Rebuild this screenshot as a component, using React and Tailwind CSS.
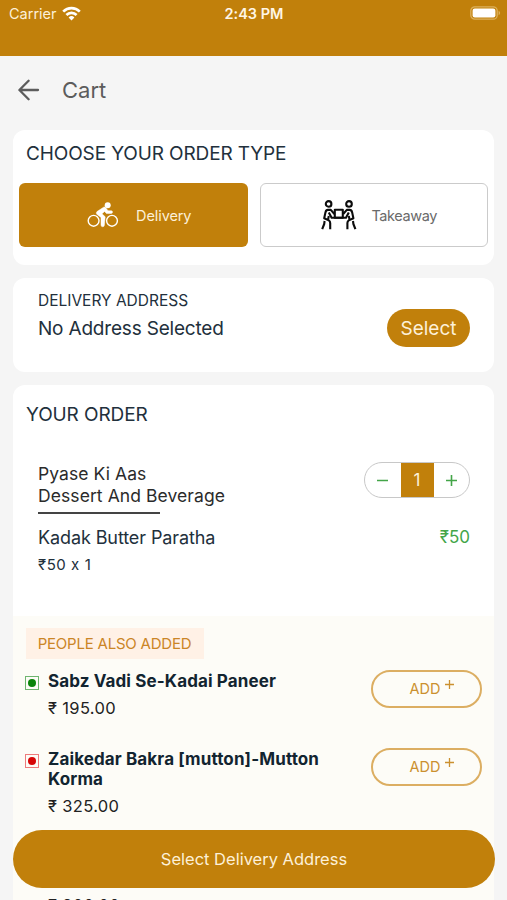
const suggestions = [
  { name: 'Sabz Vadi Se-Kadai Paneer', price: '195.00', veg: true },
  { name: 'Zaikedar Bakra [mutton]-Mutton Korma', price: '325.00', veg: false },
];

function StatusBar() {
  return (
    <div className="h-14 bg-[#c1800b] text-white grid grid-cols-3 items-start pl-[7px] pr-1.5 pt-1">
      <div className="flex items-center gap-[5px] pl-0.5 h-5">
        <span className="text-[14.5px] leading-5 text-[#fdf0d8]">Carrier</span>
        <svg className="w-[19px] h-[15px] mb-0.5" viewBox="0 0 19 15" fill="none" stroke="currentColor" strokeWidth="2.7">
          <path d="M1.2 5.6a11.8 11.8 0 0 1 16.6 0" />
          <path d="M4.4 9a7.2 7.2 0 0 1 10.2 0" />
          <path d="M9.5 14.6 6.6 11.5a4.2 4.2 0 0 1 5.8 0z" fill="currentColor" stroke="none" />
        </svg>
      </div>
      <div className="text-center text-[14.5px] leading-5 font-semibold text-[#fff6e6] whitespace-nowrap">2:43 PM</div>
      <div className="flex justify-end items-center h-[18px]">
        <svg className="w-[31px] h-[14px]" viewBox="0 0 31 14">
          <rect x="0.8" y="0.8" width="26.4" height="12.4" rx="4" fill="none" stroke="#dcb05c" strokeWidth="1.3" />
          <rect x="2.6" y="2.5" width="22.8" height="9" rx="2.2" fill="#fff" />
          <path d="M28.6 4.8c2 .8 2 3.6 0 4.4z" fill="#dcb05c" />
        </svg>
      </div>
    </div>
  );
}

function BikeIcon() {
  return (
    <svg className="w-8 h-[26px]" viewBox="0 0 32 26" fill="none" stroke="#fff">
      <circle cx="6.6" cy="18.8" r="5.4" strokeWidth="1.4" />
      <circle cx="25" cy="18.8" r="5.4" strokeWidth="1.4" />
      <circle cx="20.7" cy="3.2" r="3" fill="#fff" stroke="none" />
      <path d="M16.6 5.2 10 9.6C9 10.6 9.2 12 10.4 12.8L14 15.4V23a1.7 1.7 0 0 0 3.4 0L18.2 14.8 15 11.8 17.6 9.4 19.4 11.4H24.2A1.1 1.1 0 0 0 24.2 8.8H21L18.8 5.8C18.2 5 17.4 4.8 16.6 5.2Z" fill="#fff" strokeWidth="0.5" />
    </svg>
  );
}

function HandoverIcon() {
  return (
    <svg className="w-9 h-8" viewBox="0 0 36 32" fill="none" stroke="#0c0c0c" strokeWidth="2.1" strokeLinejoin="round">
      <circle cx="7.6" cy="4.9" r="2.8" />
      <circle cx="28" cy="4.9" r="2.8" />
      <rect x="13.8" y="10.8" width="8" height="8" />
      <path d="M13.4 15 9.8 10.9H6.8C5 10.9 4.8 12 4.4 13.6L3.2 19.2 7.8 21.4Q9.2 22.2 9.2 24V30.2" />
      <path d="M22.2 15 25.8 10.9H28.8C30.6 10.9 30.8 12 31.2 13.6L32.4 19.2 27.8 21.4Q26.4 22.2 26.4 24V30.2" />
      <path d="M7.8 13.4 10.6 18.8H25L27.8 13.4" />
      <path d="M7.8 17 7 20.8M27.8 17 28.6 20.8" />
      <path d="M3.6 22 3.2 25 1.2 30.2M32 22 32.4 25 34.4 30.2" />
    </svg>
  );
}

function FoodMark({ veg }) {
  return (
    <span className={`w-3.5 h-3.5 mt-1.5 shrink-0 border flex items-center justify-center ${veg ? 'border-[#6fb56f]' : 'border-[#ee7c7c]'}`}>
      <span className={`w-2 h-2 rounded-full ${veg ? 'bg-[#0a840a]' : 'bg-[#d60606]'}`} />
    </span>
  );
}

function AddButton() {
  return (
    <button className="w-[111px] h-[38px] shrink-0 rounded-full border-2 border-[#dcae62] text-[#cb902f] flex items-center justify-center pl-[11px]">
      <span className="text-[14.5px] leading-5">ADD</span>
      <svg className="w-[9px] h-[9px] ml-[5px] mb-[9px]" viewBox="0 0 9 9" stroke="currentColor" strokeWidth="1.3">
        <path d="M4.5 0V9M0 4.5H9" />
      </svg>
    </button>
  );
}

function App() {
  return (
    <div className="relative w-full h-[900px] overflow-hidden bg-[#f5f5f5] text-[#22303c] font-['Inter','Liberation_Sans',sans-serif] [font-feature-settings:'calt'_0]">
      <StatusBar />

      {/* Header */}
      <div className="h-[74px] flex items-center pl-[18px] pb-1.5 text-[#5c5c5c]">
        <svg className="w-[22px] h-[22px]" viewBox="0 0 22 22" fill="none" stroke="currentColor" strokeWidth="2.3" strokeLinecap="round" strokeLinejoin="round">
          <path d="M20 11H1.8M10.6 1.8 1.4 11l9.2 9.2" />
        </svg>
        <h1 className="ml-[22px] text-[22px] leading-7">Cart</h1>
      </div>

      <div className="px-[13px] flex flex-col gap-[13px]">
        {/* Order type */}
        <section className="h-[135px] bg-white rounded-xl px-1.5 pt-3">
          <h2 className="pl-[7px] text-[19px] leading-6 tracking-[-0.12px]">CHOOSE YOUR ORDER TYPE</h2>
          <div className="mt-[17px] grid grid-cols-2 gap-3">
            <button className="h-16 rounded-md bg-[#c1800b] text-[#fdf0d8] flex items-center justify-center gap-[17px] pl-3 text-[14.5px] tracking-[-0.1px]">
              <BikeIcon />
              <span className="pt-0.5">Delivery</span>
            </button>
            <button className="h-16 rounded-md border border-[#cbcbcb] text-[#6a6a6a] flex items-center justify-center gap-3.5 pl-[11px] text-[14.5px] tracking-[-0.4px]">
              <HandoverIcon />
              <span className="pt-0.5">Takeaway</span>
            </button>
          </div>
        </section>

        {/* Address */}
        <section className="h-[94px] bg-white rounded-xl pl-[25px] pr-6 flex items-start justify-between">
          <div className="pt-[13px]">
            <div className="text-[15.5px] leading-5">DELIVERY ADDRESS</div>
            <div className="mt-1.5 text-[19px] leading-6 tracking-[-0.19px]">No Address Selected</div>
          </div>
          <button className="mt-[31px] w-[83px] h-[38px] pt-px rounded-full bg-[#c1800b] text-[#fdf0d8] text-[19px] leading-6">Select</button>
        </section>

        {/* Order */}
        <section className="bg-white rounded-xl h-[600px]">
          <h2 className="pl-[13px] pt-[18px] text-[19px] leading-6 tracking-[-0.1px]">YOUR ORDER</h2>

          <div className="pl-[25px] pr-6 mt-9 h-[153px]">
            <div className="flex justify-between items-start">
              <div className="text-[17.5px] leading-[22px] tracking-[0.08px] text-[#2b2b2b]">
                <div>Pyase Ki Aas</div>
                <div>Dessert And Beverage</div>
                <div className="mt-[5px] w-[122px] h-[1.5px] bg-[#444]" />
              </div>
              <div className="w-[106px] h-9 -mt-px rounded-full border border-[#c8c8c8] flex items-stretch overflow-hidden text-[#43a548]">
                <button className="flex-1 flex items-center justify-center">
                  <svg className="w-[11px] h-[11px]" viewBox="0 0 11 11" stroke="currentColor" strokeWidth="1.6"><path d="M0 5.5H11" /></svg>
                </button>
                <span className="w-[33px] bg-[#c1800b] text-[#fdf0d8] text-[17px] flex items-center justify-center pt-0.5">1</span>
                <button className="flex-1 flex items-center justify-center">
                  <svg className="w-[11px] h-[11px]" viewBox="0 0 11 11" stroke="currentColor" strokeWidth="1.6"><path d="M0 5.5H11M5.5 0V11" /></svg>
                </button>
              </div>
            </div>
            <div className="mt-3 flex justify-between text-[18px] leading-6">
              <span className="tracking-[-0.1px]">Kadak Butter Paratha</span>
              <span className="text-[17px] leading-[22px] text-[#43a548]">₹50</span>
            </div>
            <div className="mt-[5px] text-[15px] leading-5 tracking-[0.55px]">₹50 x 1</div>
          </div>

          {/* Suggestions */}
          <div className="bg-[#fdfcf7] h-[300px] px-[13px] pt-3">
            <span className="block w-[178px] h-[31px] pr-px bg-[#fff1e6] text-[#cb8526] text-[15px] leading-[31px] tracking-[-0.22px] text-center whitespace-nowrap">PEOPLE ALSO ADDED</span>
            {suggestions.map((item) => (
              <div key={item.name} className="flex items-start pt-[11px] pb-[17px] -ml-px">
                <FoodMark veg={item.veg} />
                <div className="ml-[9px] w-[300px] -mt-[3px]">
                  <div className="text-[17px] leading-[20.5px] font-bold tracking-[0.12px] text-[#122430] pt-1">{item.name}</div>
                  <div className="mt-1 text-[16.5px] leading-6 tracking-[0.35px] text-[#222]">₹ {item.price}</div>
                </div>
                <div className="ml-auto -mr-px">
                  <AddButton />
                </div>
              </div>
            ))}
            <div className="pl-[22px] mt-[58px] text-[16.5px] leading-6 tracking-[0.35px] text-[#222]">₹ 200.00</div>
          </div>
        </section>
      </div>

      {/* Sticky footer action */}
      <button className="absolute left-[13px] right-[12px] top-[830px] h-[57.5px] pt-px rounded-full bg-[#c1800b] text-[#fdf0d8] text-[16.5px]">
        Select Delivery Address
      </button>
    </div>
  );
}

export default App;
